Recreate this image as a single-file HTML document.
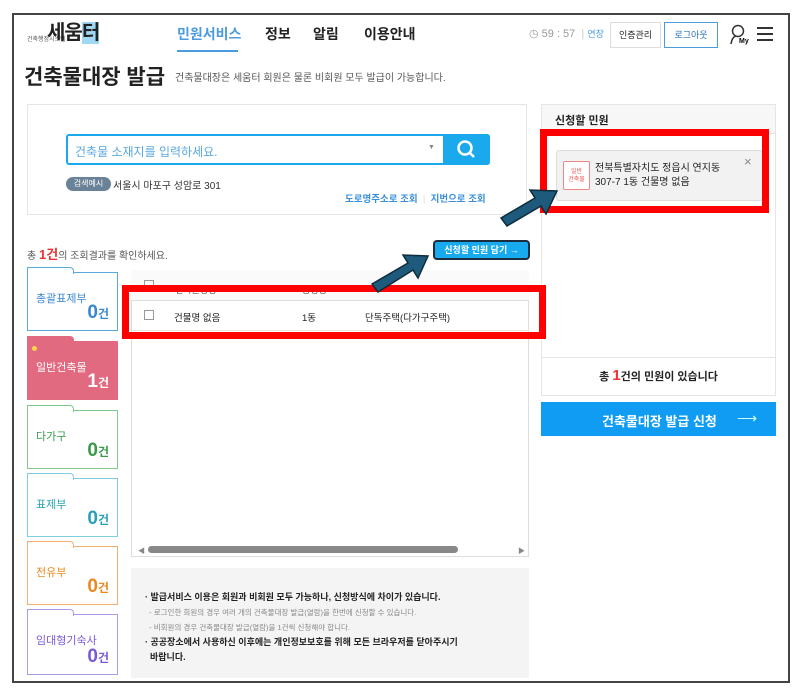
<!DOCTYPE html>
<html><head><meta charset="utf-8"><style>
*{margin:0;padding:0;box-sizing:border-box}
body{width:794px;height:693px;background:#fff;font-family:"Liberation Sans","Noto Sans CJK KR",sans-serif;position:relative;overflow:hidden;color:#222}
.a{position:absolute}
.frame{left:12px;top:13px;width:778px;height:670px;border:2px solid #444}
.nav{font-size:14px;font-weight:bold;top:24px}
.card{position:absolute;left:27px;width:91px;height:59px;border:1px solid;background:#fff;font-size:11px}
.card .t{position:absolute;left:8px;top:17px}
.card .n{position:absolute;right:8px;bottom:6px;font-size:19px;font-weight:bold}
.card .n small{font-size:12px}
.card:before{content:"";position:absolute;left:-1px;top:-6px;width:45px;height:6px;border:1px solid;border-color:inherit;border-bottom:none;background:inherit;border-radius:0 4px 0 0}
.red{position:absolute;border:7px solid #f00}
</style></head><body>
<div class="a frame"></div>
<div class="a" style="left:27px;top:34px;font-size:6px;color:#555">건축행정시스템</div>
<div class="a" style="left:47px;top:16px;font-size:20px;font-weight:bold;color:#222;letter-spacing:-1px">세움<span style="background:#9fd8f4">터</span></div>
<div class="a nav" style="left:177px;color:#4a9be0">민원서비스</div>
<div class="a" style="left:177px;top:50px;width:61px;height:2px;background:#4a9be0"></div>
<div class="a nav" style="left:265px">정보</div>
<div class="a nav" style="left:313px">알림</div>
<div class="a nav" style="left:364px">이용안내</div>
<div class="a" style="left:529px;top:27px;font-size:11px;color:#999">◷ 59 : 57 &nbsp;<span style="color:#ccc">|</span> <span style="color:#4a9be0;font-size:9px">연장</span></div>
<div class="a" style="left:610px;top:22px;width:51px;height:26px;border:1px solid #ddd;font-size:9px;text-align:center;line-height:24px">인증관리</div>
<div class="a" style="left:664px;top:22px;width:54px;height:26px;border:1px solid #4a9be0;font-size:9px;text-align:center;line-height:24px;color:#2a70b8">로그아웃</div>
<svg class="a" style="left:728px;top:23px" width="48" height="22"><circle cx="10" cy="8" r="5.5" fill="none" stroke="#333" stroke-width="1.5"/><path d="M3 21 Q4 14 8 13" fill="none" stroke="#333" stroke-width="1.5"/><text x="11" y="20" font-size="7" font-weight="bold" font-family="Liberation Sans">My</text><path d="M29 5h16M29 11h16M29 17h16" stroke="#333" stroke-width="2"/></svg>
<div class="a" style="left:24px;top:61px;font-size:21px;font-weight:bold">건축물대장 발급</div>
<div class="a" style="left:175px;top:69px;font-size:10px;color:#555">건축물대장은 세움터 회원은 물론 비회원 모두 발급이 가능합니다.</div>
<div class="a" style="left:27px;top:104px;width:500px;height:111px;border:1px solid #e5e5e5"></div>
<div class="a" style="left:66px;top:134px;width:424px;height:31px;border:2px solid #1aa9ec;border-radius:3px;background:#fff"></div>
<div class="a" style="left:443px;top:134px;width:47px;height:31px;background:#1aa9ec;border-radius:0 3px 3px 0"></div>
<svg class="a" style="left:455px;top:138px" width="24" height="24"><circle cx="10" cy="10" r="6.5" fill="none" stroke="#fff" stroke-width="2.5"/><path d="M15 15l4 4" stroke="#fff" stroke-width="2.5"/></svg>
<div class="a" style="left:75px;top:143px;font-size:12px;color:#5aa8e0">건축물 소재지를 입력하세요.</div>
<div class="a" style="left:428px;top:144px;font-size:7px;color:#888">▼</div>
<div class="a" style="left:66px;top:177px;width:45px;height:14px;border-radius:7px;background:#6a8298;color:#fff;font-size:8px;text-align:center;line-height:14px">검색예시</div>
<div class="a" style="left:113px;top:177px;font-size:10px;color:#333">서울시 마포구 성암로 301</div>
<div class="a" style="left:345px;top:191px;font-size:9.5px;color:#3a8fd8;font-weight:bold">도로명주소로 조회 &nbsp;<span style="color:#ddd;font-weight:normal">|</span>&nbsp; 지번으로 조회</div>
<div class="a" style="left:27px;top:244px;font-size:10px;color:#555">총 <b style="color:#e33;font-size:13px">1건</b>의 조회결과를 확인하세요.</div>
<div class="a" style="left:433px;top:240px;width:97px;height:20px;background:#18aaee;border:2px solid #1c2e3e;border-radius:4px;color:#fff;font-size:9px;font-weight:bold;text-align:center;line-height:16px">신청할 민원 담기 →</div>
<div class="a" style="left:131px;top:270px;width:398px;height:287px;border:1px solid #ddd"></div>
<div class="a" style="left:131px;top:270px;width:398px;height:31px;background:#fafafa;border-bottom:1px solid #ddd"></div>
<div class="a" style="left:144px;top:280px;width:10px;height:10px;border:1px solid #999"></div>
<div class="a" style="left:175px;top:283px;font-size:9px;color:#555">건축물명칭</div>
<div class="a" style="left:302px;top:283px;font-size:9px;color:#555">동명칭</div>
<div class="a" style="left:131px;top:330px;width:398px;height:1px;background:#e5e5e5"></div>
<div class="a" style="left:144px;top:310px;width:10px;height:10px;border:1px solid #999"></div>
<div class="a" style="left:174px;top:310px;font-size:9.5px">건물명 없음</div>
<div class="a" style="left:302px;top:310px;font-size:9.5px">1동</div>
<div class="a" style="left:365px;top:310px;font-size:9.5px">단독주택(다가구주택)</div>
<div class="a" style="left:138px;top:546px;font-size:7px;color:#888">◀</div>
<div class="a" style="left:148px;top:546px;width:310px;height:7px;background:#888;border-radius:4px"></div>
<div class="a" style="left:518px;top:546px;font-size:7px;color:#888">▶</div>
<div class="card" style="top:272px;border-color:#5aa8e0;color:#3a88d0;height:59px"><div class="t">총괄표제부</div><div class="n">0<small>건</small></div></div>
<div class="card" style="top:341px;border-color:#e26a80;background:#e26a80;color:#fff"><div class="t">일반건축물</div><div class="n">1<small>건</small></div><div class="a" style="left:4px;top:4px;width:5px;height:5px;border-radius:50%;background:#ffd84a"></div></div>
<div class="card" style="top:410px;border-color:#7fc98a;color:#3a9a4a"><div class="t">다가구</div><div class="n">0<small>건</small></div></div>
<div class="card" style="top:478px;border-color:#7dcfe0;color:#2aa0b8"><div class="t">표제부</div><div class="n">0<small>건</small></div></div>
<div class="card" style="top:546px;border-color:#f5b070;color:#e88a20"><div class="t">전유부</div><div class="n">0<small>건</small></div></div>
<div class="card" style="top:614px;border-color:#b09ae8;color:#7a5ad8;height:61px"><div class="t">임대형기숙사</div><div class="n">0<small>건</small></div></div>
<div class="a" style="left:131px;top:568px;width:398px;height:110px;background:#f4f4f4"></div>
<div class="a" style="left:145px;top:590px;font-size:9px;font-weight:bold;line-height:15px;width:380px">· 발급서비스 이용은 회원과 비회원 모두 가능하나, 신청방식에 차이가 있습니다.<br>
<span style="font-weight:normal;font-size:7.5px;color:#888;line-height:15px">&nbsp;&nbsp;- 로그인한 회원의 경우 여러 개의 건축물대장 발급(열람)을 한번에 신청할 수 있습니다.<br>&nbsp;&nbsp;- 비회원의 경우 건축물대장 발급(열람)을 1건씩 신청해야 합니다.</span><br>
· 공공장소에서 사용하신 이후에는 개인정보보호를 위해 모든 브라우저를 닫아주시기<br>&nbsp;&nbsp;바랍니다.</div>
<div class="a" style="left:541px;top:104px;width:235px;height:292px;border:1px solid #e5e5e5;background:#fff"></div>
<div class="a" style="left:541px;top:104px;width:235px;height:30px;background:#f7f7f7;border:1px solid #e5e5e5"></div>
<div class="a" style="left:555px;top:112px;font-size:11px;font-weight:bold">신청할 민원</div>
<div class="a" style="left:556px;top:150px;width:207px;height:51px;background:#f2f2f2;border:1px solid #ddd;border-radius:3px"></div>
<div class="a" style="left:563px;top:161px;width:27px;height:29px;border:1px solid #e88;background:#fff;color:#e55;font-size:6px;text-align:center;padding-top:6px;line-height:8px;border-radius:2px">일반<br>건축물</div>
<div class="a" style="left:595px;top:162px;font-size:10px;line-height:14px">전북특별자치도 정읍시 연지동<br>307-7 1동 건물명 없음</div>
<div class="a" style="left:744px;top:154px;font-size:13px;color:#888">×</div>
<div class="a" style="left:541px;top:357px;width:235px;height:1px;background:#e5e5e5"></div>
<div class="a" style="left:541px;top:367px;width:235px;text-align:center;font-size:11px;font-weight:bold">총 <span style="color:#e33;font-size:15px">1</span>건의 민원이 있습니다</div>
<div class="a" style="left:541px;top:402px;width:235px;height:34px;background:#119cf4"></div>
<div class="a" style="left:602px;top:411px;font-size:13px;font-weight:bold;color:#fff">건축물대장 발급 신청</div>
<div class="a" style="left:737px;top:410px;font-size:14px;color:#cfe">⟶</div>
<div class="red" style="left:122px;top:285px;width:424px;height:54px"></div>
<div class="red" style="left:540px;top:129px;width:229px;height:84px"></div>
<svg class="a" style="left:0;top:0" width="794" height="693">
<g fill="#1d5a7c" stroke="#0f2c3c" stroke-width="1.5">
<polygon points="372,284 408,263 403,255 428,256 418,278 413,270 378,292"/>
<polygon points="501,218 535,198 530,190 557,191 546,214 541,206 507,226"/>
</g></svg>
</body></html>
